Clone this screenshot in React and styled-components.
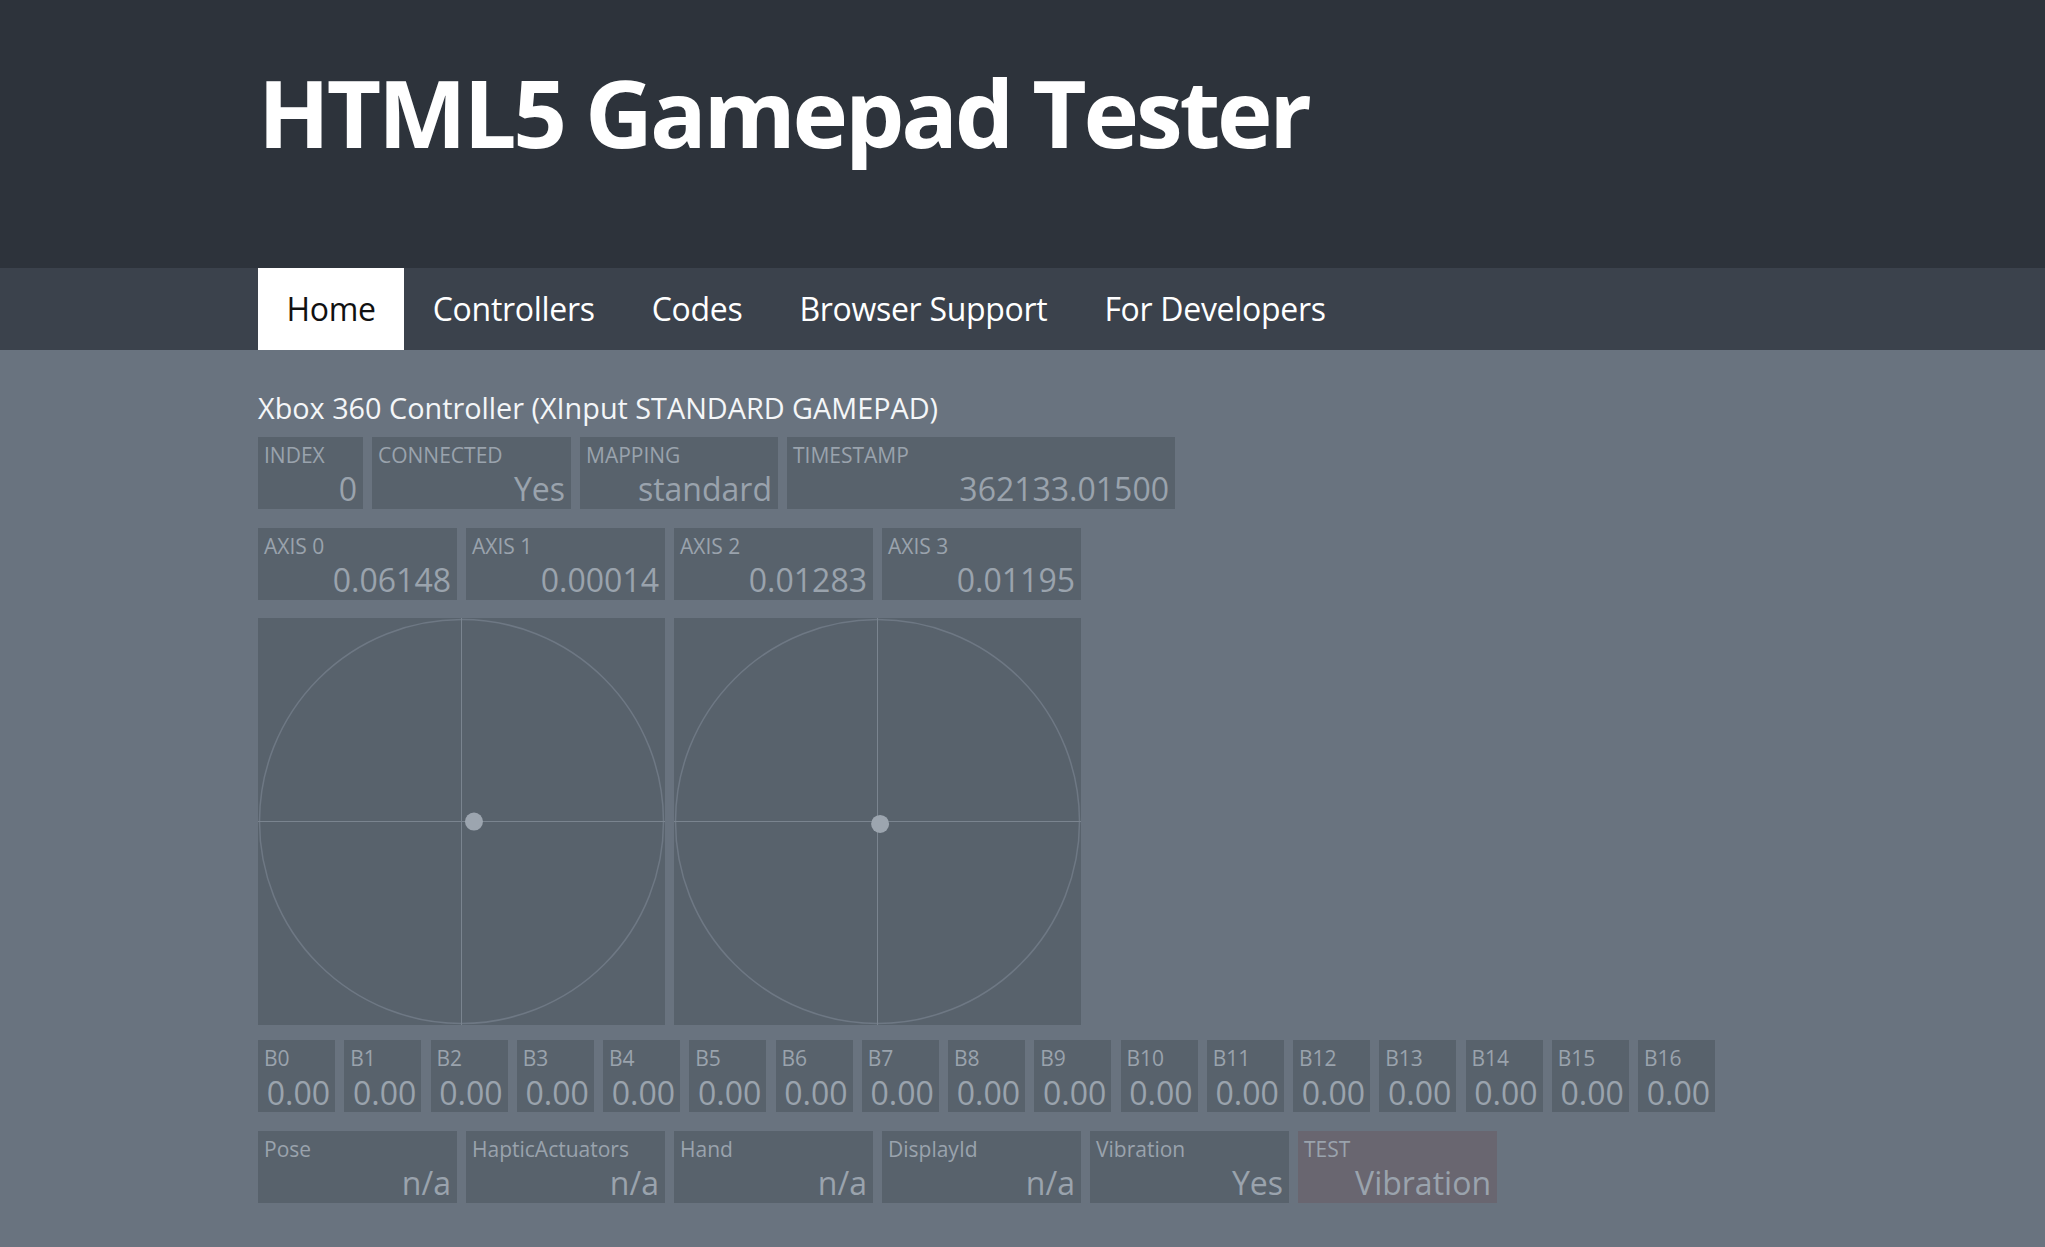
import React from "react";
import styled, { createGlobalStyle } from "styled-components";

const Global = createGlobalStyle`
  html, body { margin: 0; padding: 0; }
  body {
    background: #69737f;
    font-family: "Open Sans", "Noto Sans", sans-serif;
    min-height: 1247px;
  }
`;

const Header = styled.header`
  background: #2d333b;
  height: 268px;
  box-sizing: border-box;
  padding-top: 65px;
`;

const Container = styled.div`
  width: 1529px;
  margin: 0 auto;
`;

const Title = styled.h1`
  margin: 0;
  color: #ffffff;
  font-weight: 700;
  font-size: 94px;
  line-height: 94px;
  letter-spacing: -3.2px;
`;

const NavBar = styled.nav`
  background: #3b424c;
  height: 82px;
`;

const NavList = styled.ul`
  display: flex;
  margin: 0;
  padding: 0;
  list-style: none;
`;

const NavItem = styled.li`
  padding: 0 28.5px;
  height: 82px;
  font-size: 32px;
  line-height: 82px;
  color: ${(p) => (p.$active ? "#111" : "#ffffff")};
  background: ${(p) => (p.$active ? "#ffffff" : "transparent")};
  letter-spacing: -0.3px;
`;

const Main = styled.main`
  padding-top: 44px;
`;

const DeviceName = styled.div`
  color: #f4f6f8;
  font-size: 28.8px;
  line-height: 28px;
`;

const Row = styled.div`
  display: flex;
  gap: ${(p) => p.$gap || 9}px;
  margin-top: ${(p) => p.$mt}px;
`;

const Box = styled.div`
  width: ${(p) => p.$w}px;
  height: 72px;
  box-sizing: border-box;
  background: ${(p) => (p.$tint ? "#696670" : "#58626c")};
  color: #9aa3ad;
  padding: 6px 6px 4px 6px;
  display: flex;
  flex-direction: column;
  justify-content: space-between;
  flex-shrink: 0;
`;

const Label = styled.div`
  font-size: 21px;
  line-height: 24px;
  white-space: nowrap;
`;

const Value = styled.div`
  font-size: 32px;
  line-height: 32px;
  text-align: right;
  white-space: nowrap;
`;

const StickCanvas = styled.svg`
  display: block;
  width: 407px;
  height: 407px;
  background: #58626c;
`;

const BtnBox = styled(Box)`
  padding: 6px 5px 3px 6px;
`;

function Stick({ x, y }) {
  const c = 203.5;
  const r = 203;
  return (
    <StickCanvas viewBox="0 0 407 407">
      <circle cx={c} cy={c} r={r - 1} fill="none" stroke="#6e7884" strokeWidth="1.5" />
      <line x1={c} y1="0" x2={c} y2="407" stroke="#7a848f" strokeWidth="1" />
      <line x1="0" y1={c} x2="407" y2={c} stroke="#7a848f" strokeWidth="1" />
      <circle cx={c + x * r} cy={c + y * r} r="9" fill="#9ca5af" />
    </StickCanvas>
  );
}

const info = [
  { label: "INDEX", value: "0", w: 105 },
  { label: "CONNECTED", value: "Yes", w: 199 },
  { label: "MAPPING", value: "standard", w: 198 },
  { label: "TIMESTAMP", value: "362133.01500", w: 388 },
];

const axes = ["0.06148", "0.00014", "0.01283", "0.01195"];

const extras = [
  { label: "Pose", value: "n/a" },
  { label: "HapticActuators", value: "n/a" },
  { label: "Hand", value: "n/a" },
  { label: "DisplayId", value: "n/a" },
  { label: "Vibration", value: "Yes" },
  { label: "TEST", value: "Vibration", tint: true },
];

export default function App() {
  return (
    <>
      <Global />
      <Header>
        <Container>
          <Title>HTML5 Gamepad Tester</Title>
        </Container>
      </Header>
      <NavBar>
        <Container>
          <NavList>
            <NavItem $active>Home</NavItem>
            <NavItem>Controllers</NavItem>
            <NavItem>Codes</NavItem>
            <NavItem>Browser Support</NavItem>
            <NavItem>For Developers</NavItem>
          </NavList>
        </Container>
      </NavBar>
      <Main>
        <Container>
          <DeviceName>Xbox 360 Controller (XInput STANDARD GAMEPAD)</DeviceName>
          <Row $mt={15}>
            {info.map((i) => (
              <Box key={i.label} $w={i.w}>
                <Label>{i.label}</Label>
                <Value>{i.value}</Value>
              </Box>
            ))}
          </Row>
          <Row $mt={19}>
            {axes.map((v, idx) => (
              <Box key={idx} $w={199}>
                <Label>AXIS {idx}</Label>
                <Value>{v}</Value>
              </Box>
            ))}
          </Row>
          <Row $mt={18}>
            <Stick x={0.06148} y={0.00014} />
            <Stick x={0.01283} y={0.01195} />
          </Row>
          <Row $mt={15} $gap={9.25}>
            {Array.from({ length: 17 }, (_, i) => (
              <BtnBox key={i} $w={77}>
                <Label>B{i}</Label>
                <Value>0.00</Value>
              </BtnBox>
            ))}
          </Row>
          <Row $mt={19}>
            {extras.map((e) => (
              <Box key={e.label} $w={199} $tint={e.tint}>
                <Label>{e.label}</Label>
                <Value>{e.value}</Value>
              </Box>
            ))}
          </Row>
        </Container>
      </Main>
    </>
  );
}
